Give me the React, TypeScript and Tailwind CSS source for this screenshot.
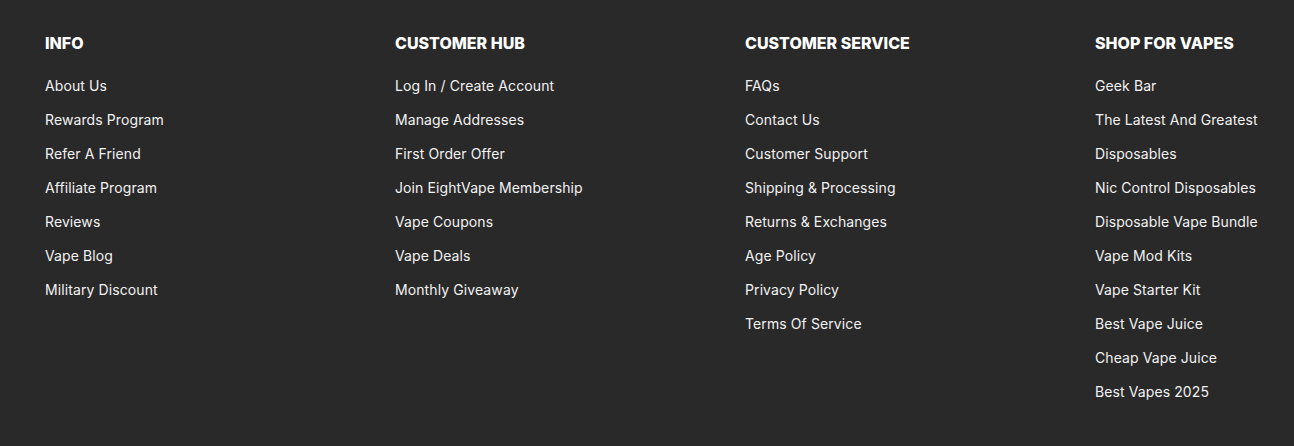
import React from "react";

interface FooterColumn {
  title: string;
  links: string[];
}

const columns: FooterColumn[] = [
  {
    title: "INFO",
    links: [
      "About Us",
      "Rewards Program",
      "Refer A Friend",
      "Affiliate Program",
      "Reviews",
      "Vape Blog",
      "Military Discount",
    ],
  },
  {
    title: "CUSTOMER HUB",
    links: [
      "Log In / Create Account",
      "Manage Addresses",
      "First Order Offer",
      "Join EightVape Membership",
      "Vape Coupons",
      "Vape Deals",
      "Monthly Giveaway",
    ],
  },
  {
    title: "CUSTOMER SERVICE",
    links: [
      "FAQs",
      "Contact Us",
      "Customer Support",
      "Shipping & Processing",
      "Returns & Exchanges",
      "Age Policy",
      "Privacy Policy",
      "Terms Of Service",
    ],
  },
  {
    title: "SHOP FOR VAPES",
    links: [
      "Geek Bar",
      "The Latest And Greatest",
      "Disposables",
      "Nic Control Disposables",
      "Disposable Vape Bundle",
      "Vape Mod Kits",
      "Vape Starter Kit",
      "Best Vape Juice",
      "Cheap Vape Juice",
      "Best Vapes 2025",
    ],
  },
];

const Column = ({ column }: { column: FooterColumn }) => (
  <div className="flex flex-col">
    <h3 className="text-[16px] leading-[24px] font-extrabold text-white font-['Inter',sans-serif]">
      {column.title}
    </h3>
    <ul className="mt-[14px] flex flex-col">
      {column.links.map((link) => (
        <li key={link} className="h-[34px]">
          <a
            href="#"
            className="block text-[14px] leading-[34px] text-[#f2f2f2] tracking-[0.1px] font-['Inter',sans-serif] hover:underline"
          >
            {link}
          </a>
        </li>
      ))}
    </ul>
  </div>
);

export default function App() {
  return (
    <footer className="w-full min-h-[446px] bg-[#292929] overflow-hidden">
      <div className="grid grid-cols-[350px_350px_350px_1fr] pl-[45px] pt-[31px] pb-[37px]">
        {columns.map((column) => (
          <Column key={column.title} column={column} />
        ))}
      </div>
    </footer>
  );
}
